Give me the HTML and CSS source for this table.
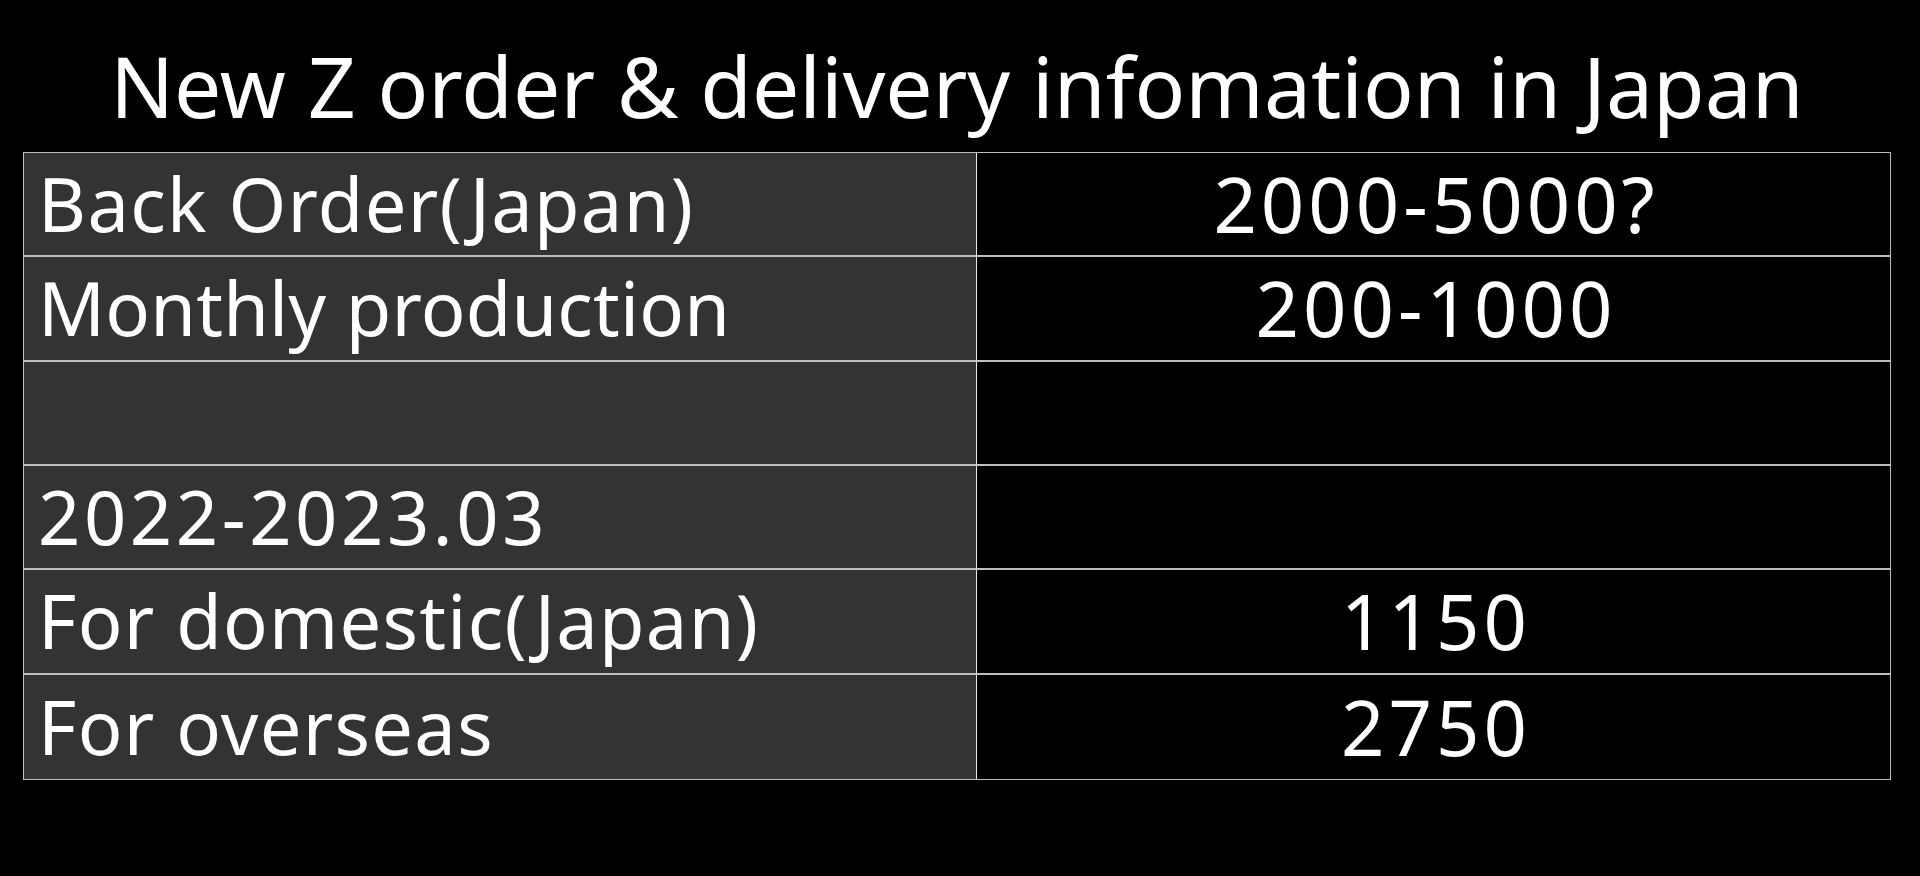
FILE: index.html
```html
<!DOCTYPE html>
<html lang="en">
<head>
<meta charset="utf-8">
<title>New Z order &amp; delivery infomation in Japan</title>
<link rel="stylesheet" href="styles.css">
</head>
<body>
<main class="slide">
  <h1 class="title">New Z order &amp; delivery infomation in Japan</h1>
  <div class="grid">
    <div class="cell label">Back Order(Japan)</div>
    <div class="cell value">2000-5000?</div>
    <div class="cell label label-tight">Monthly production</div>
    <div class="cell value">200-1000</div>
    <div class="cell label"></div>
    <div class="cell value"></div>
    <div class="cell label label-num">2022-2023.03</div>
    <div class="cell value"></div>
    <div class="cell label">For domestic(Japan)</div>
    <div class="cell value">1150</div>
    <div class="cell label">For overseas</div>
    <div class="cell value">2750</div>
  </div>
</main>
</body>
</html>
```
FILE: styles.css
```css
html, body {
  margin: 0;
  padding: 0;
  background: #000;
}
body {
  width: 1920px;
  height: 876px;
  overflow: hidden;
  font-family: "Noto Sans", "Noto Sans CJK JP", sans-serif;
  color: #fff;
}
.slide {
  padding: 0 29px 0 23px;
}
.title {
  margin: 0;
  height: 152px;
  display: flex;
  align-items: center;
  justify-content: center;
  font-weight: 400;
  font-size: 84px;
  line-height: 1;
  padding-top: 20px;
  box-sizing: border-box;
  white-space: nowrap;
}
.grid {
  display: grid;
  grid-template-columns: 953px 914px;
  grid-auto-rows: 104.33px;
  border: 1px solid #bdbdbd;
  width: 1868px;
  box-sizing: border-box;
}
.cell {
  display: flex;
  align-items: center;
  font-size: 74px;
  line-height: 1;
  white-space: nowrap;
  border-bottom: 2px solid #bdbdbd;
  box-sizing: border-box;
}
.cell:nth-last-child(-n+2) {
  border-bottom: 0;
}
.label {
  background: #333;
  padding-left: 14px;
  letter-spacing: 1.3px;
  border-right: 1px solid #e6e6e6;
}
.label-tight {
  letter-spacing: 0.2px;
}
.label-num {
  letter-spacing: 3.6px;
}
.value {
  justify-content: center;
  font-size: 76px;
  letter-spacing: 4px;
  padding-left: 4px;
}
```
